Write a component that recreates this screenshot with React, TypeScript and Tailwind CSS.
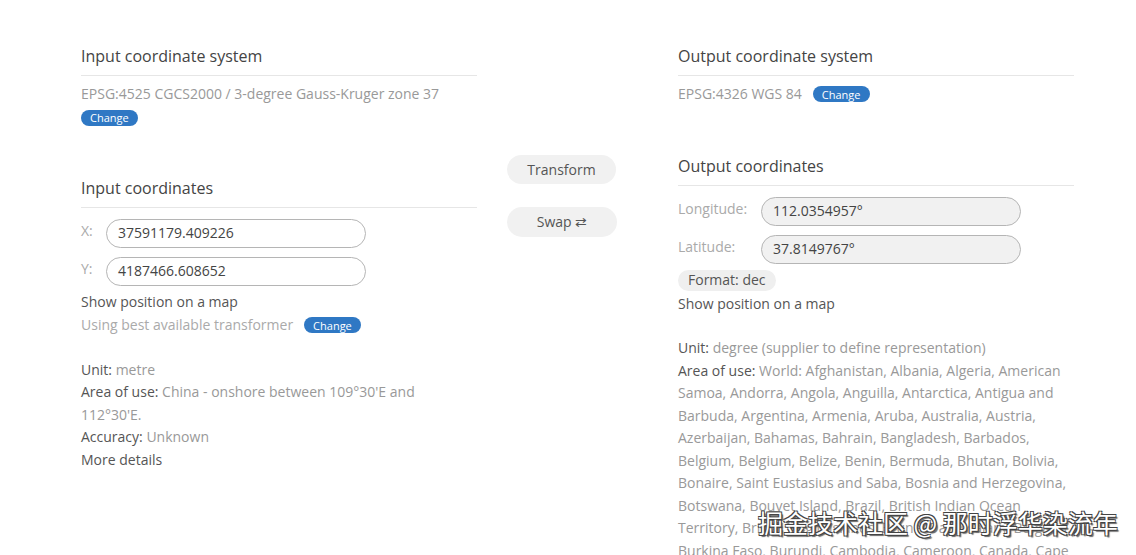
import React from "react";

const Badge = ({ className = "" }: { className?: string }) => (
  <span
    className={`inline-flex items-center justify-center h-[16px] px-[9px] rounded-full bg-[#2f78c4] text-white text-[11px] leading-none ${className}`}
  >
    Change
  </span>
);

const Heading = ({ children }: { children: React.ReactNode }) => (
  <div className="text-[16px] leading-[24px] text-[#444] pb-[7px] border-b border-[#e6e6e6]">
    {children}
  </div>
);

const Field = ({
  label,
  value,
  labelW,
  readOnly,
}: {
  label: string;
  value: string;
  labelW: string;
  readOnly?: boolean;
}) => (
  <div className="flex items-start">
    <div className={`${labelW} shrink-0 text-[#aaa] text-[14px] leading-[22px] pt-[1px]`}>{label}</div>
    <div
      className={`w-[260px] h-[29px] rounded-full border border-[#b5b5b5] flex items-center pl-[11px] text-[14px] text-[#444] ${
        readOnly ? "bg-[#f1f1f1]" : "bg-white"
      }`}
    >
      {value}
    </div>
  </div>
);

export default function App() {
  return (
    <div className="relative w-[1136px] h-[555px] overflow-hidden bg-white font-['Open_Sans',sans-serif] text-[14px] leading-[22.5px] text-[#555]">
      <div className="flex pt-[44px]">
        {/* Left column */}
        <div className="ml-[81px] w-[396px] shrink-0">
          <Heading>Input coordinate system</Heading>
          <div className="mt-[7px] text-[#999]">EPSG:4525 CGCS2000 / 3-degree Gauss-Kruger zone 37</div>
          <div className="mt-[4px] flex">
            <Badge />
          </div>

          <div className="mt-[50px]">
            <Heading>Input coordinates</Heading>
          </div>
          <div className="mt-[11px] flex flex-col gap-[9px]">
            <Field label="X:" value="37591179.409226" labelW="w-[25px]" />
            <Field label="Y:" value="4187466.608652" labelW="w-[25px]" />
          </div>
          <div className="mt-[5px] text-[#555]">Show position on a map</div>
          <div className="mt-[1px] flex items-center text-[#aaa]">
            <span>Using best available transformer</span>
            <Badge className="ml-[11px]" />
          </div>

          <div className="mt-[22px]">
            <div>
              <span className="text-[#555]">Unit:</span> <span className="text-[#999]">metre</span>
            </div>
            <div>
              <span className="text-[#555]">Area of use:</span>{" "}
              <span className="text-[#999]">China - onshore between 109°30'E and 112°30'E.</span>
            </div>
            <div>
              <span className="text-[#555]">Accuracy:</span> <span className="text-[#999]">Unknown</span>
            </div>
            <div className="text-[#555]">More details</div>
          </div>
        </div>

        {/* Middle column */}
        <div className="w-[201px] shrink-0 pl-[30px] pt-[111px] flex flex-col gap-[23px]">
          <button className="w-[109px] h-[29px] rounded-full bg-[#f1f1f1] text-[#555] text-[14px] pt-[1px]">
            Transform
          </button>
          <button className="w-[110px] h-[30px] rounded-full bg-[#f1f1f1] text-[#555] text-[14px]">
            Swap ⇄
          </button>
        </div>

        {/* Right column */}
        <div className="w-[396px] shrink-0">
          <Heading>Output coordinate system</Heading>
          <div className="mt-[7px] flex items-center text-[#999]">
            <span>EPSG:4326 WGS 84</span>
            <Badge className="ml-[11px]" />
          </div>

          <div className="mt-[48px]">
            <Heading>Output coordinates</Heading>
          </div>
          <div className="mt-[11px] flex flex-col gap-[9px]">
            <Field label="Longitude:" value="112.0354957°" labelW="w-[83px]" readOnly />
            <Field label="Latitude:" value="37.8149767°" labelW="w-[83px]" readOnly />
          </div>
          <div className="mt-[6px] flex">
            <span className="inline-flex items-center h-[21px] px-[10px] rounded-full bg-[#efefef] text-[#555]">
              Format: dec
            </span>
          </div>
          <div className="mt-[2px] text-[#555]">Show position on a map</div>

          <div className="mt-[22px]">
            <div>
              <span className="text-[#555]">Unit:</span>{" "}
              <span className="text-[#999]">degree (supplier to define representation)</span>
            </div>
            <div>
              <span className="text-[#555]">Area of use:</span>{" "}
              <span className="text-[#999]">
                World: Afghanistan, Albania, Algeria, American Samoa, Andorra, Angola, Anguilla, Antarctica,
                Antigua and Barbuda, Argentina, Armenia, Aruba, Australia, Austria, Azerbaijan, Bahamas,
                Bahrain, Bangladesh, Barbados, Belgium, Belgium, Belize, Benin, Bermuda, Bhutan, Bolivia,
                Bonaire, Saint Eustasius and Saba, Bosnia and Herzegovina, Botswana, Bouvet Island, Brazil,
                British Indian Ocean Territory, British Virgin Islands, Brunei Darussalam, Bulgaria, Burkina
                Faso, Burundi, Cambodia, Cameroon, Canada, Cape Verde, Cayman Islands, Central African
                Republic, Chad, Chile, China.
              </span>
            </div>
          </div>
        </div>
      </div>

      {/* Watermark */}
      <div className="absolute left-[758px] top-[506px] text-[25px] leading-[32px] text-white font-['Noto_Sans_CJK_SC',sans-serif] whitespace-nowrap [text-shadow:1px_1px_0_#444,-1px_-1px_0_#444,1px_-1px_0_#444,-1px_1px_0_#444,2px_2px_1px_#666]">
        掘金技术社区 @ 那时浮华染流年
      </div>
    </div>
  );
}
